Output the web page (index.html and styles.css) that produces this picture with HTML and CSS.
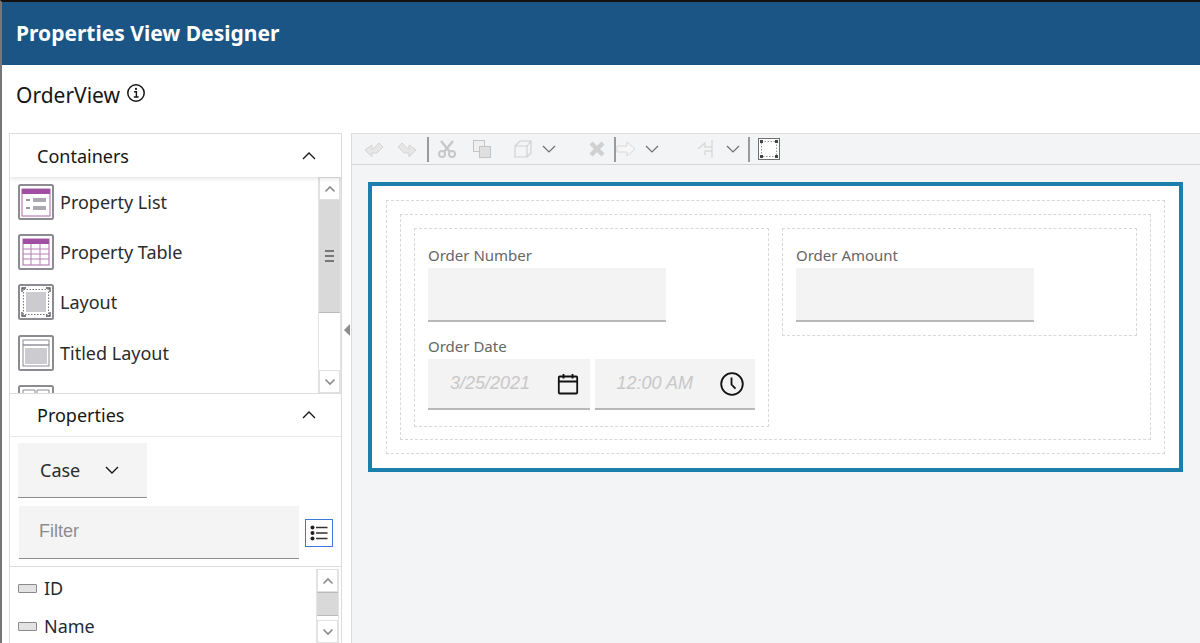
FILE: index.html
```html
<!DOCTYPE html>
<html lang="en">
<head>
	<meta charset="utf-8">
	<title>Properties View Designer</title>
	<link rel="stylesheet" href="styles.css">
</head>
<body>
	<div class="app">
		<div class="banner">Properties View Designer</div>
		<div class="view-title">
			<span>OrderView</span>
			<svg class="info" width="20" height="20" viewBox="0 0 20 20"><circle cx="10" cy="10" r="8.2" fill="none" stroke="#161616" stroke-width="1.5"/><path d="M8 8.8h2.4v5M7.8 14h4.8" fill="none" stroke="#161616" stroke-width="1.4"/><circle cx="10" cy="5.9" r="1.1" fill="#161616"/></svg>
		</div>
		<div class="workspace">
			<div class="left-panel">
				<div class="section-head shadow">
					<span>Containers</span>
					<svg class="chev" width="16" height="10" viewBox="0 0 16 10"><path d="M2 8l6-6 6 6" fill="none" stroke="#161616" stroke-width="1.3"/></svg>
				</div>
				<div class="palette">
					<div class="palette-list">
						<div class="palette-item">
							<svg class="pal-icon" width="36" height="36" viewBox="0 0 36 36"><rect x="1" y="1" width="34" height="34" rx="1.5" fill="#fff" stroke="#8d8a92" stroke-width="2"/><rect x="4" y="5" width="28" height="27" fill="#fff" stroke="#a866a8"/><rect x="4" y="5" width="28" height="5" fill="#a14fa3"/><path d="M8 16h4M8 24h4" stroke="#777" stroke-width="1.5"/><rect x="15" y="14" width="13" height="4" fill="#a9a9ae"/><rect x="15" y="22" width="13" height="4" fill="#a9a9ae"/></svg>
							<span>Property List</span>
						</div>
						<div class="palette-item">
							<svg class="pal-icon" width="36" height="36" viewBox="0 0 36 36"><rect x="1" y="1" width="34" height="34" rx="1.5" fill="#fff" stroke="#8d8a92" stroke-width="2"/><rect x="5" y="5" width="26" height="26" fill="#fff" stroke="#a866a8"/><rect x="5" y="5" width="26" height="5" fill="#a14fa3"/><path d="M5 15h26M5 20h26M5 25h26M13 10v21M22 10v21" stroke="#b57fb5"/></svg>
							<span>Property Table</span>
						</div>
						<div class="palette-item">
							<svg class="pal-icon" width="36" height="36" viewBox="0 0 36 36"><rect x="1" y="1" width="34" height="34" rx="1.5" fill="#fff" stroke="#8d8a92" stroke-width="2"/><rect x="5.5" y="5.5" width="25" height="25" fill="none" stroke="#77757c" stroke-dasharray="1.5 1.5"/><rect x="8" y="8" width="20" height="20" fill="#cbcbd0"/><path d="M4 8V4h4M28 4h4v4M32 28v4h-4M8 32H4v-4" fill="none" stroke="#55535a" stroke-width="1.3"/></svg>
							<span>Layout</span>
						</div>
						<div class="palette-item">
							<svg class="pal-icon" width="36" height="36" viewBox="0 0 36 36"><rect x="1" y="1" width="34" height="34" rx="1.5" fill="#fff" stroke="#8d8a92" stroke-width="2"/><rect x="5" y="5" width="26" height="26" fill="#fff" stroke="#8d8a92"/><path d="M5 10h26" stroke="#8d8a92" stroke-width="1.4"/><rect x="7" y="13" width="22" height="16" fill="#cbcbd0"/></svg>
							<span>Titled Layout</span>
						</div>
						<div class="palette-item">
							<svg class="pal-icon" width="36" height="36" viewBox="0 0 36 36"><rect x="1" y="1" width="34" height="34" rx="1.5" fill="#fff" stroke="#8d8a92" stroke-width="2"/><path d="M5 5h12v10H5zM19 5h12v10H19z" fill="#fff" stroke="#8d8a92"/></svg>
							<span>Tabs</span>
						</div>
					</div>
					<div class="scrollbar">
						<div class="scroll-btn"><svg width="12" height="8" viewBox="0 0 12 8"><path d="M1.5 6.5L6 2l4.500 4.500" fill="none" stroke="#8a8a8a" stroke-width="1.6"/></svg></div>
						<div class="scroll-thumb tall"><span class="grip"></span></div>
						<div class="scroll-track"></div>
						<div class="scroll-btn"><svg width="12" height="8" viewBox="0 0 12 8"><path d="M1.500 1.500L6 6l4.500-4.500" fill="none" stroke="#8a8a8a" stroke-width="1.6"/></svg></div>
					</div>
				</div>
				<div class="section-head props-head">
					<span>Properties</span>
					<svg class="chev" width="16" height="10" viewBox="0 0 16 10"><path d="M2 8l6-6 6 6" fill="none" stroke="#161616" stroke-width="1.3"/></svg>
				</div>
				<div class="props-tools">
					<div class="case-select">
						<span>Case</span>
						<svg width="16" height="10" viewBox="0 0 16 10"><path d="M2 2l6 6 6-6" fill="none" stroke="#161616" stroke-width="1.4"/></svg>
					</div>
					<div class="filter-row">
						<div class="filter-box">Filter</div>
						<div class="list-toggle">
							<svg width="18" height="16" viewBox="0 0 18 16"><circle cx="2.500" cy="2.500" r="2" fill="#222"/><circle cx="2.500" cy="8" r="2" fill="#222"/><circle cx="2.500" cy="13.500" r="2" fill="#222"/><path d="M6 2.500h11.500M6 8h11.500M6 13.500h11.500" stroke="#333" stroke-width="1.300"/></svg>
						</div>
					</div>
				</div>
				<div class="prop-area">
					<div class="prop-list">
						<div class="prop-item"><span class="field-glyph"></span><span>ID</span></div>
						<div class="prop-item"><span class="field-glyph"></span><span>Name</span></div>
					</div>
					<div class="scrollbar small">
						<div class="scroll-btn"><svg width="12" height="8" viewBox="0 0 12 8"><path d="M1.500 6.500L6 2l4.500 4.500" fill="none" stroke="#8a8a8a" stroke-width="1.6"/></svg></div>
						<div class="scroll-thumb short"></div>
						<div class="scroll-track"></div>
						<div class="scroll-btn"><svg width="12" height="8" viewBox="0 0 12 8"><path d="M1.500 1.500L6 6l4.500-4.500" fill="none" stroke="#8a8a8a" stroke-width="1.6"/></svg></div>
					</div>
				</div>
			</div>
			<div class="splitter"><svg width="6" height="12" viewBox="0 0 6 12"><path d="M6 0v12L0 6z" fill="#8d8d8d"/></svg></div>
			<div class="canvas-panel">
				<div class="toolbar">
					<svg class="tool t-undo" width="24" height="20" viewBox="0 0 24 20"><path d="M3 11l7 7v-4h5l6-6-4-4-6 6h-1V6z" fill="#e6e6e6" stroke="#d4d4d4"/></svg>
					<svg class="tool t-redo" width="24" height="20" viewBox="0 0 24 20"><path d="M21 11l-7 7v-4H9L3 8l4-4 6 6h1V6z" fill="#e6e6e6" stroke="#d4d4d4"/></svg>
					<span class="tool-sep"></span>
					<svg class="tool t-cut" width="20" height="20" viewBox="0 0 20 20"><circle cx="5" cy="15" r="3" fill="none" stroke="#c8c8c8" stroke-width="2"/><circle cx="15" cy="15" r="3" fill="none" stroke="#c8c8c8" stroke-width="2"/><path d="M4 2l9 11M16 2L7 13" stroke="#c8c8c8" stroke-width="2.500"/></svg>
					<svg class="tool t-copy" width="20" height="20" viewBox="0 0 20 20"><rect x="1.500" y="1.500" width="11" height="11" fill="#efefef" stroke="#c4c4c4"/><rect x="7.500" y="7.500" width="11" height="11" fill="#e0e0e0" stroke="#c4c4c4"/></svg>
					<svg class="tool t-paste" width="20" height="20" viewBox="0 0 20 20"><path d="M2 7l5-5h11v12l-4 4H2zM2 7h12v11M14 7l4-5" fill="none" stroke="#d0d0d0" stroke-width="1.200"/></svg>
					<svg class="tool-chev" width="14" height="8" viewBox="0 0 14 8"><path d="M1 1l6 6 6-6" fill="none" stroke="#6f6f6f" stroke-width="1.200"/></svg>
					<svg class="tool t-del" width="18" height="18" viewBox="0 0 18 18"><path d="M3 3l12 12M15 3L3 15" stroke="#d0d0d0" stroke-width="4.500"/></svg>
					<span class="tool-sep"></span>
					<svg class="tool t-right" width="20" height="18" viewBox="0 0 20 18"><path d="M1 6h10V2l8 7-8 7v-4H1z" fill="#f6f6f6" stroke="#d8d8d8"/></svg>
					<svg class="tool-chev" width="14" height="8" viewBox="0 0 14 8"><path d="M1 1l6 6 6-6" fill="none" stroke="#6f6f6f" stroke-width="1.200"/></svg>
					<svg class="tool t-left" width="20" height="20" viewBox="0 0 20 20"><path d="M1 10l7-6v4h7M8 16v-4h7M15 1v18" fill="none" stroke="#d8d8d8" stroke-width="1.300"/></svg>
					<svg class="tool-chev" width="14" height="8" viewBox="0 0 14 8"><path d="M1 1l6 6 6-6" fill="none" stroke="#6f6f6f" stroke-width="1.200"/></svg>
					<span class="tool-sep"></span>
					<svg class="tool t-frame" width="22" height="22" viewBox="0 0 22 22"><rect x="0.500" y="0.500" width="21" height="21" fill="#fff" stroke="#6f6f6f"/><rect x="3.500" y="3.500" width="15" height="15" fill="none" stroke="#999" stroke-dasharray="1.500 1.500"/><path d="M2 2h3v3H2zM17 2h3v3h-3zM2 17h3v3H2zM17 17h3v3h-3z" fill="#444"/></svg>
				</div>
				<div class="canvas">
					<div class="root-layout">
						<div class="dash outer">
							<div class="dash inner">
								<div class="dash col left-col">
									<div class="field">
										<label>Order Number</label>
										<div class="input"></div>
									</div>
									<div class="field">
										<label>Order Date</label>
										<div class="date-time">
											<div class="input small date">
												<span>3/25/2021</span>
												<svg width="24" height="24" viewBox="0 0 24 24"><rect x="2.800" y="4.500" width="18.400" height="17" rx="1" fill="none" stroke="#111" stroke-width="1.800"/><path d="M2.800 9.500h18.400M7.500 2v4.500M16.500 2v4.500" fill="none" stroke="#111" stroke-width="1.800"/></svg>
											</div>
											<div class="input small time">
												<span>12:00 AM</span>
												<svg width="26" height="26" viewBox="0 0 26 26"><circle cx="13" cy="13" r="10.800" fill="none" stroke="#111" stroke-width="1.800"/><path d="M12.500 6.500v7l4 4.200" fill="none" stroke="#111" stroke-width="1.800"/></svg>
											</div>
										</div>
									</div>
								</div>
								<div class="dash col right-col">
									<div class="field">
										<label>Order Amount</label>
										<div class="input"></div>
									</div>
								</div>
							</div>
						</div>
					</div>
				</div>
			</div>
		</div>
	</div>
</body>
</html>
```

FILE: styles.css
```css
html, body {
	margin: 0;
	height: 100%;
	overflow: hidden;
}
body {
	background-color: #fff;
	font-family: "Noto Sans", "Open Sans", sans-serif;
	color: #161616;
}
.app {
	height: 643px;
	display: flex;
	flex-direction: column;
	border-top: 2px solid #111;
	border-left: 2px solid #777;
	box-sizing: border-box;
}
.banner {
	height: 63px;
	line-height: 62px;
	padding-left: 14px;
	background-color: #1b5586;
	color: #fff;
	font-size: 21px;
	font-weight: 700;
	box-sizing: border-box;
}
.view-title {
	height: 68px;
	display: flex;
	align-items: center;
	gap: 6px;
	padding: 0 0 8px 14px;
	font-size: 21px;
	box-sizing: border-box;
}
.info {
	margin-bottom: 4px;
}
.workspace {
	flex: 1;
	display: flex;
	padding-left: 7px;
	min-height: 0;
}
.left-panel {
	width: 333px;
	display: flex;
	flex-direction: column;
	border: 1px solid #dcdcdc;
	border-bottom: 0;
	box-sizing: border-box;
	overflow: hidden;
}
.section-head {
	height: 43px;
	flex: none;
	display: flex;
	align-items: center;
	justify-content: space-between;
	padding: 0 24px 0 27px;
	font-size: 18px;
	box-sizing: border-box;
}
.section-head.shadow {
	box-shadow: 0 2px 4px rgba(0, 0, 0, 0.1);
	position: relative;
}
.props-head {
	border-top: 1px solid #dcdcdc;
	border-bottom: 1px solid #e8e8e8;
	height: 44px;
}
.palette {
	height: 216px;
	flex: none;
	display: flex;
	overflow: hidden;
}
.palette-list {
	flex: 1;
	padding-left: 8px;
}
.palette-item {
	height: 50.2px;
	display: flex;
	align-items: center;
	gap: 6px;
	font-size: 18px;
	color: #2b2b2b;
}
.scrollbar {
	width: 23px;
	flex: none;
	display: flex;
	flex-direction: column;
	border-left: 1px solid #e4e4e4;
	border-right: 1px solid #e4e4e4;
	box-sizing: border-box;
}
.scroll-btn {
	height: 21px;
	flex: none;
	display: flex;
	align-items: center;
	justify-content: center;
	border: 1px solid #e0e0e0;
	background-color: #fff;
}
.scroll-thumb {
	flex: none;
	display: flex;
	align-items: center;
	justify-content: center;
	background-color: #d9d9d9;
	border-bottom: 1px solid #bbb;
}
.scroll-thumb.tall {
	height: 112px;
}
.scroll-thumb.short {
	height: 22px;
	border-top: 1px solid #bbb;
}
.scroll-track {
	flex: 1;
}
.grip {
	width: 9px;
	height: 8px;
	border-top: 2px solid #777;
	border-bottom: 2px solid #777;
	position: relative;
}
.grip::after {
	content: "";
	display: block;
	height: 2px;
	margin-top: 3px;
	background-color: #777;
}
.props-tools {
	flex: none;
	padding: 6px 0 0 8px;
	height: 130px;
	border-bottom: 1px solid #dcdcdc;
	box-sizing: border-box;
}
.case-select {
	width: 129px;
	height: 55px;
	display: flex;
	align-items: center;
	gap: 24px;
	padding-left: 22px;
	background-color: #f4f4f4;
	border-bottom: 1px solid #8d8d8d;
	font-size: 18px;
	color: #2b2b2b;
	box-sizing: border-box;
}
.filter-row {
	display: flex;
	align-items: center;
	gap: 6px;
	margin-top: 8px;
}
.filter-box {
	width: 280px;
	height: 53px;
	line-height: 50px;
	margin-left: 1px;
	padding-left: 20px;
	background-color: #f4f4f4;
	border-bottom: 1px solid #8d8d8d;
	font-family: "Liberation Sans", sans-serif;
	font-size: 18px;
	color: #8d8d8d;
	box-sizing: border-box;
}
.list-toggle {
	width: 28px;
	height: 28px;
	display: flex;
	align-items: center;
	justify-content: center;
	border: 1px solid #3b78d8;
	box-sizing: border-box;
}
.prop-area {
	flex: 1;
	display: flex;
	min-height: 0;
	padding: 2px 2px 0 0;
}
.prop-list {
	flex: 1;
	padding-left: 8px;
}
.prop-item {
	height: 38px;
	display: flex;
	align-items: center;
	gap: 7px;
	font-size: 18px;
	color: #1f2a36;
}
.field-glyph {
	width: 17px;
	height: 7px;
	border: 1.5px solid #8a8a8a;
	border-radius: 1px;
	background-color: #e3e3e3;
}
.splitter {
	width: 9px;
	flex: none;
	display: flex;
	align-items: center;
	justify-content: center;
	padding-bottom: 116px;
	background-color: #fff;
	box-sizing: border-box;
}
.canvas-panel {
	flex: 1;
	display: flex;
	flex-direction: column;
	background-color: #f3f4f6;
	border-left: 1px solid #dcdcdc;
	border-top: 1px solid #dcdcdc;
	min-width: 0;
}
.toolbar {
	height: 31px;
	flex: none;
	display: flex;
	align-items: center;
	padding-left: 10px;
	border-bottom: 1px solid #d4d4d4;
	box-sizing: border-box;
}
.tool, .tool-chev, .tool-sep {
	flex: none;
}
.tool-sep {
	width: 2px;
	height: 25px;
	background-color: #9a9a9a;
}
.t-redo { margin-left: 9px; }
.tool-sep { margin-left: 8px; }
.t-cut { margin-left: 8px; }
.t-copy { margin-left: 15px; }
.t-paste { margin-left: 21px; }
.tool-chev { margin-left: 9px; }
.t-del { margin-left: 32px; }
.t-right { margin-left: 0; }
.t-left { margin-left: 38px; }
.t-frame { margin-left: 8px; }
.canvas {
	flex: 1;
	padding: 17px 17px 0 16px;
}
.root-layout {
	height: 290px;
	padding: 14px;
	background-color: #fff;
	border: 4px solid #1a7fab;
	box-sizing: border-box;
}
.dash {
	border: 1px dashed #d8d8d8;
	box-sizing: border-box;
}
.outer {
	height: 100%;
	padding: 13px;
}
.inner {
	height: 100%;
	padding: 13px;
	display: flex;
	align-items: flex-start;
	gap: 13px;
}
.col {
	padding: 16px 13px 0;
}
.left-col {
	width: 355px;
	height: 199px;
}
.right-col {
	width: 356px;
	height: 108px;
}
.field {
	margin-bottom: 14px;
}
.field label {
	display: block;
	height: 23px;
	line-height: 21px;
	font-size: 15px;
	color: #666;
}
.input {
	width: 238px;
	height: 54px;
	background-color: #f3f3f3;
	border-bottom: 2px solid #b8b8b8;
	box-sizing: border-box;
}
.date-time {
	display: flex;
	gap: 5px;
}
.input.small {
	height: 51px;
	display: flex;
	align-items: center;
	justify-content: space-between;
	padding: 0 10px 0 22px;
	font-family: "Liberation Sans", sans-serif;
	font-style: italic;
	font-size: 18px;
	color: #c8c8c8;
}
.date {
	width: 162px;
}
.time {
	width: 161px;
}
```
